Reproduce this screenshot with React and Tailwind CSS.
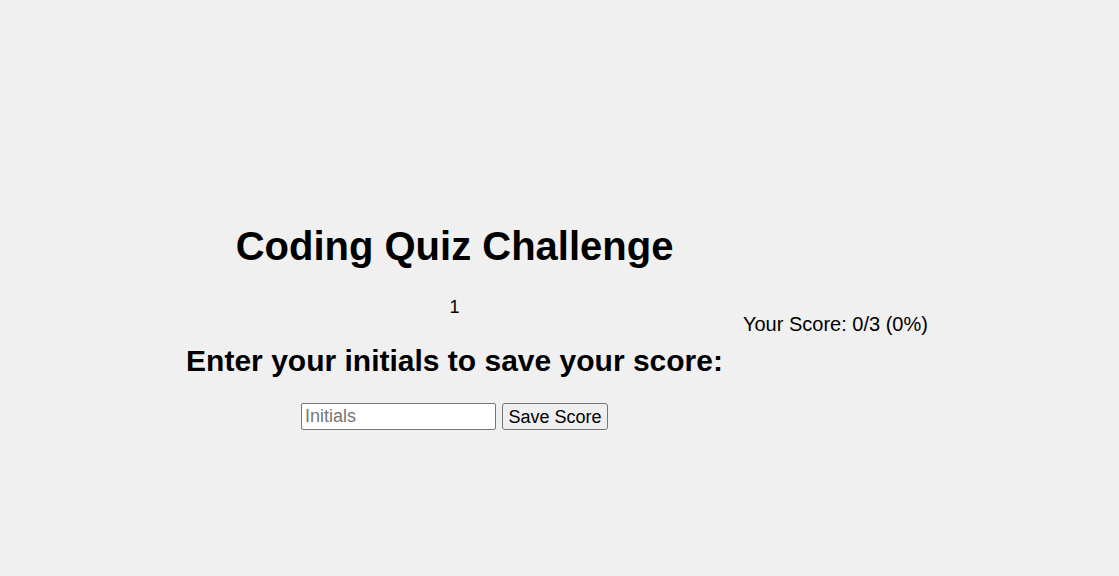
import React, { useState } from 'react';

const App = () => {
  const [initials, setInitials] = useState('');

  return (
    <div
      className="flex h-[576px] items-center justify-center gap-5 bg-[#f0f0f0] pt-[77px] pr-[5px] text-black"
      style={{ fontFamily: '"Liberation Sans", Arial, sans-serif' }}
    >
      {/* Quiz end screen */}
      <div className="flex flex-col items-center text-center">
        <h1 className="text-[40px] leading-[46px] font-bold">Coding Quiz Challenge</h1>
        <p className="mt-[28px] text-[18px] leading-[21px]">1</p>
        <h2 className="mt-[26px] text-[30px] leading-[34px] font-bold whitespace-nowrap">
          Enter your initials to save your score:
        </h2>
        <form className="mt-[25px] flex items-center gap-[6px]" onSubmit={(e) => e.preventDefault()}>
          <input
            type="text"
            value={initials}
            onChange={(e) => setInitials(e.target.value)}
            placeholder="Initials"
            className="h-[27px] w-[195px] rounded-[2px] border border-[#767676] bg-white px-[3px] text-[18px] text-black placeholder:text-[#757575] outline-none"
          />
          <button
            type="submit"
            className="h-[27px] w-[106px] rounded-[3px] border border-[#767676] bg-[#efefef] text-[18px] leading-none text-black"
          >
            Save Score
          </button>
        </form>
      </div>

      {/* Score */}
      <p className="mb-[5px] text-[20px] leading-[23px] whitespace-nowrap">Your Score: 0/3 (0%)</p>
    </div>
  );
};

export default App;
